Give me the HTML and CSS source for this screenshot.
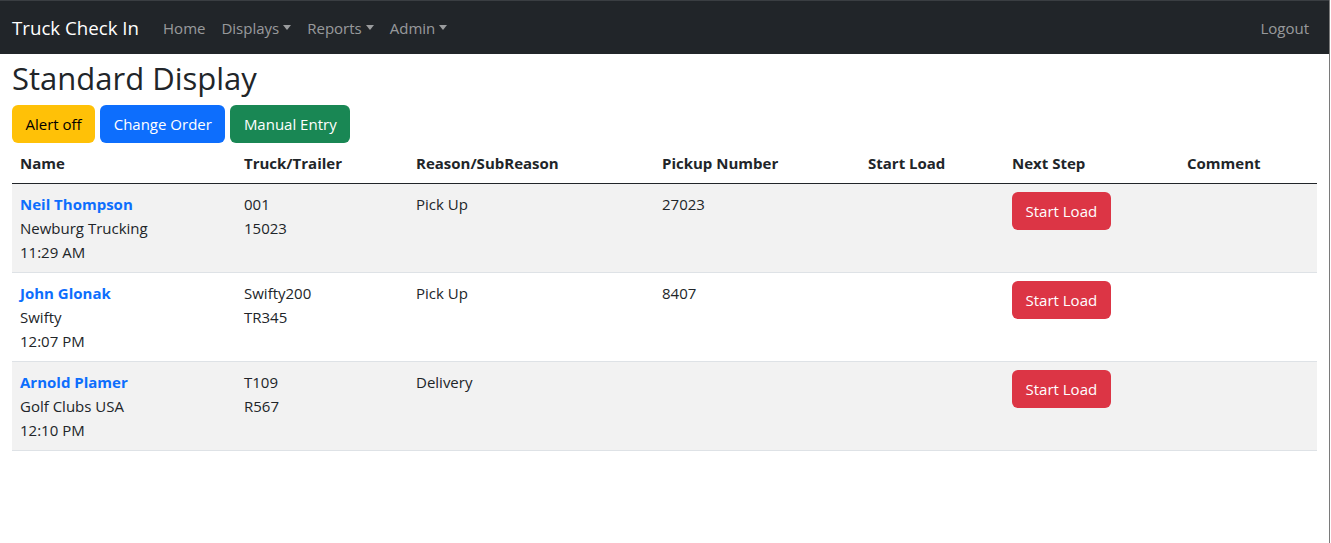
FILE: index.html
```html
<!DOCTYPE html>
<html lang="en">

<head>
    <meta charset="UTF-8">
    <meta name="viewport" content="width=device-width, initial-scale=1.0">
    <title>Standard Display - Truck Check In</title>
    <link rel="stylesheet" href="styles.css">
</head>

<body>
    <div class="page">
        <nav class="navbar">
            <a class="brand" href="#">Truck Check In</a>
            <ul class="nav-links">
                <li><a href="#">Home</a></li>
                <li><a href="#" class="dropdown">Displays</a></li>
                <li><a href="#" class="dropdown">Reports</a></li>
                <li><a href="#" class="dropdown">Admin</a></li>
            </ul>
            <a class="logout" href="#">Logout</a>
        </nav>

        <main class="content">
            <h2>Standard Display</h2>
            <div class="actions">
                <button type="button" class="btn btn-warning">Alert off</button>
                <button type="button" class="btn btn-primary">Change Order</button>
                <button type="button" class="btn btn-success">Manual Entry</button>
            </div>

            <table class="checkins">
                <colgroup>
                    <col class="col-name">
                    <col class="col-truck">
                    <col class="col-reason">
                    <col class="col-pickup">
                    <col class="col-start">
                    <col class="col-next">
                    <col class="col-comment">
                </colgroup>
                <thead>
                    <tr>
                        <th>Name</th>
                        <th>Truck/Trailer</th>
                        <th>Reason/SubReason</th>
                        <th>Pickup Number</th>
                        <th>Start Load</th>
                        <th>Next Step</th>
                        <th>Comment</th>
                    </tr>
                </thead>
                <tbody>
                    <tr>
                        <td><a href="#" class="driver">Neil Thompson</a><br>Newburg Trucking<br>11:29 AM</td>
                        <td>001<br>15023</td>
                        <td>Pick Up</td>
                        <td>27023</td>
                        <td></td>
                        <td><button type="button" class="btn btn-danger">Start Load</button></td>
                        <td></td>
                    </tr>
                    <tr>
                        <td><a href="#" class="driver">John Glonak</a><br>Swifty<br>12:07 PM</td>
                        <td>Swifty200<br>TR345</td>
                        <td>Pick Up</td>
                        <td>8407</td>
                        <td></td>
                        <td><button type="button" class="btn btn-danger">Start Load</button></td>
                        <td></td>
                    </tr>
                    <tr>
                        <td><a href="#" class="driver">Arnold Plamer</a><br>Golf Clubs USA<br>12:10 PM</td>
                        <td>T109<br>R567</td>
                        <td>Delivery</td>
                        <td></td>
                        <td></td>
                        <td><button type="button" class="btn btn-danger">Start Load</button></td>
                        <td></td>
                    </tr>
                </tbody>
            </table>
        </main>
    </div>
</body>

</html>
```

FILE: styles.css
```css
/* Basic Reset */
* {
    margin: 0;
    padding: 0;
    box-sizing: border-box;
}

body {
    font-family: 'Open Sans', 'Noto Sans', sans-serif;
    font-size: 15px;
    line-height: 24px;
    color: #212529;
    background-color: #fff;
}

.page {
    width: 1330px;
    min-height: 543px;
    border-right: 1px solid #7a7a7a;
}

a {
    text-decoration: none;
}

/* Navbar */
.navbar {
    display: flex;
    align-items: center;
    height: 54px;
    padding: 0 12px;
    background-color: #212529;
    border-top: 1px solid #3a3e42;
}

.brand {
    color: #fff;
    font-size: 18.7px;
    margin-right: 16px;
}

.nav-links {
    display: flex;
    list-style: none;
    flex: 1;
}

.nav-links a,
.logout {
    display: block;
    padding: 8px;
    color: rgba(255, 255, 255, 0.55);
}

.dropdown::after {
    content: "";
    display: inline-block;
    margin-left: 4px;
    vertical-align: 4px;
    border-top: 5px solid;
    border-right: 4px solid transparent;
    border-left: 4px solid transparent;
}

/* Content */
.content {
    padding: 0 12px;
}

h2 {
    font-size: 31px;
    font-weight: 500;
    line-height: 38px;
    margin: 5px 0 8px;
}

.actions {
    display: flex;
    gap: 5px;
}

.btn {
    font-family: inherit;
    font-size: 15px;
    line-height: 24px;
    padding: 6px 12.5px;
    border: 1px solid transparent;
    border-radius: 6px;
    cursor: pointer;
    color: #fff;
}

.btn-warning {
    background-color: #ffc107;
    color: #000;
}

.btn-primary {
    background-color: #0d6efd;
}

.btn-success {
    background-color: #198754;
}

.btn-danger {
    background-color: #dc3545;
}

/* Table */
.checkins {
    width: 100%;
    border-collapse: collapse;
    table-layout: fixed;
}

.col-name { width: 224px; }
.col-truck { width: 172px; }
.col-reason { width: 246px; }
.col-pickup { width: 206px; }
.col-start { width: 144px; }
.col-next { width: 175px; }

.checkins th,
.checkins td {
    text-align: left;
    vertical-align: top;
    padding: 8px;
    border-bottom: 1px solid #dee2e6;
}

.checkins th {
    font-weight: bold;
    border-bottom: 1px solid #212529;
}

.checkins tbody tr:nth-child(odd) {
    background-color: #f2f2f2;
}

.driver {
    color: #0d6efd;
    font-weight: bold;
}
```
